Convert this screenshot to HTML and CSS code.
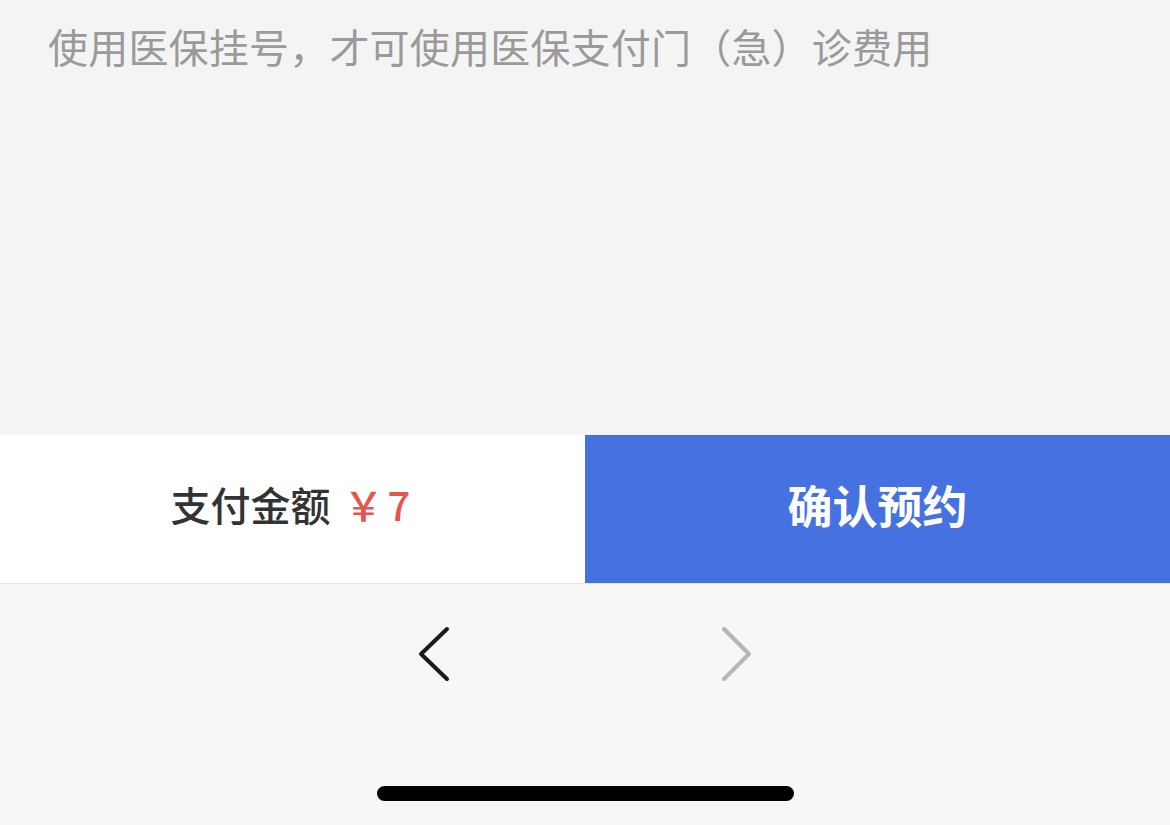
FILE: index.html
```html
<!DOCTYPE html>
<html lang="zh-CN">
<head>
  <meta charset="UTF-8" />
  <meta name="viewport" content="width=device-width, initial-scale=1.0"/>
  <title>确认预约</title>
  <link rel="stylesheet" href="styles.css">
</head>
<body>
  <div class="page">

    <!-- Notice text -->
    <div class="notice">使用医保挂号，才可使用医保支付门（急）诊费用</div>

    <!-- Pay bar -->
    <div class="paybar">
      <div class="amount">
        <span class="label">支付金额</span>
        <span class="price">￥7</span>
      </div>
      <button class="confirm-btn">确认预约</button>
    </div>

    <!-- Browser nav -->
    <div class="nav">
      <div class="arrows">
        <svg class="arrow" width="34" height="56" viewBox="0 0 34 56">
          <path d="M30 3 L4 28 L30 53" fill="none" stroke="#1a1a1a" stroke-width="4" stroke-linecap="round" stroke-linejoin="round"/>
        </svg>
        <svg class="arrow" width="34" height="56" viewBox="0 0 34 56">
          <path d="M4 3 L29 28 L4 53" fill="none" stroke="#b5b5b5" stroke-width="4" stroke-linecap="round" stroke-linejoin="round"/>
        </svg>
      </div>
      <div class="home-bar"></div>
    </div>

  </div>
</body>
</html>
```

FILE: styles.css
```css
body {
  margin: 0;
  font-family: "Noto Sans CJK SC", "Noto Sans", sans-serif;
  background-color: #f7f7f7;
}

.page {
  width: 1170px;
  height: 825px;
  display: flex;
  flex-direction: column;
  overflow: hidden;
}

.notice {
  height: 435px;
  box-sizing: border-box;
  padding: 18px 0 0 48px;
  background-color: #f4f4f4;
  color: #9a9a9a;
  font-size: 40px;
  line-height: 56px;
  letter-spacing: 0.2px;
}

/* bottom pay bar */
.paybar {
  display: flex;
  height: 148px;
  border-bottom: 1px solid #e2e2e2;
}

.amount {
  width: 585px;
  box-sizing: border-box;
  background-color: #fff;
  display: flex;
  align-items: center;
  justify-content: center;
  gap: 13px;
  padding-bottom: 10px;
}

.label {
  font-size: 40px;
  font-weight: 500;
  color: #333;
}

.price {
  font-size: 40px;
  font-weight: 500;
  color: #e5544e;
  letter-spacing: 4px;
}

.confirm-btn {
  width: 585px;
  margin: 0;
  padding: 0 0 10px;
  border: none;
  background-color: #4571e1;
  color: #fff;
  font-family: inherit;
  font-size: 45px;
  font-weight: 700;
  cursor: pointer;
}

.nav {
  flex: 1;
  background-color: #f7f7f7;
  display: flex;
  flex-direction: column;
  align-items: center;
  padding-top: 42px;
}

.arrows {
  display: flex;
  gap: 269px;
}

.arrow {
  display: block;
}

.home-bar {
  width: 417px;
  height: 15px;
  margin-top: 104px;
  border-radius: 8px;
  background-color: #000;
}
```
